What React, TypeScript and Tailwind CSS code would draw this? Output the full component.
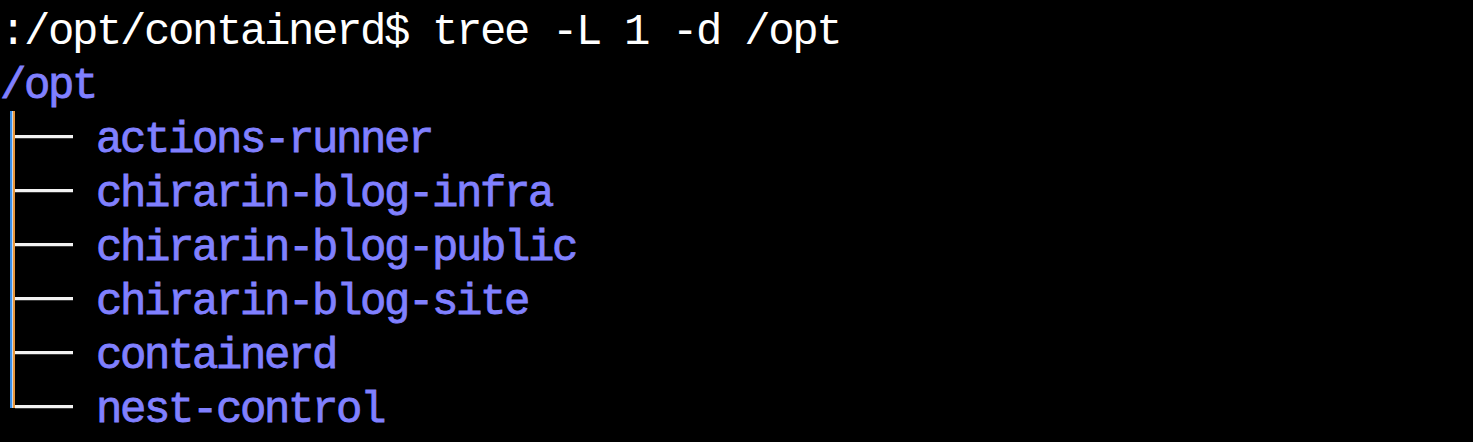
import React from 'react';

const dirs = [
  'actions-runner',
  'chirarin-blog-infra',
  'chirarin-blog-public',
  'chirarin-blog-site',
  'containerd',
  'nest-control',
];

const font = "font-['Liberation_Mono','DejaVu_Sans_Mono',monospace] text-[44px] tracking-[-2.4px]";

const Branch: React.FC<{ first: boolean; last: boolean }> = ({ first, last }) => {
  return (
    <div className="flex h-full w-[96px] shrink-0 pl-[10px]">
      <div className={`flex ${first ? 'mt-[3px]' : ''} ${last ? 'h-[30px]' : 'h-full'}`}>
        <div className="w-[2px] bg-[#3a8ee6]" />
        <div className="w-[1px] bg-[#c9d6e6]" />
        <div className="w-[2px] bg-[#e8963a]" />
      </div>
      <div className="mt-[27px] flex h-[4px] w-[58px] flex-col">
        <div className="h-[3px] bg-[#f2f2f2]" />
        <div className="h-[1px] bg-[#3a3a3a]" />
      </div>
    </div>
  );
};

const Line: React.FC<{ children: React.ReactNode; className?: string }> = ({ children, className }) => {
  return (
    <div className={`h-[54px] whitespace-pre pt-[11px] leading-[43px] ${font} ${className ?? ''}`}>
      {children}
    </div>
  );
};

const dirText = 'text-[#8080ff] [-webkit-text-stroke:0.8px_#8080ff]';

export default function App() {
  return (
    <div className="h-[442px] w-full overflow-hidden bg-black">
      <Line className="text-white">:/opt/containerd$ tree -L 1 -d /opt</Line>
      <Line className={dirText}>/opt</Line>
      {dirs.map((d, i) => (
        <div key={d} className="flex h-[54px]">
          <Branch first={i === 0} last={i === dirs.length - 1} />
          <Line className={dirText}>{d}</Line>
        </div>
      ))}
    </div>
  );
}
